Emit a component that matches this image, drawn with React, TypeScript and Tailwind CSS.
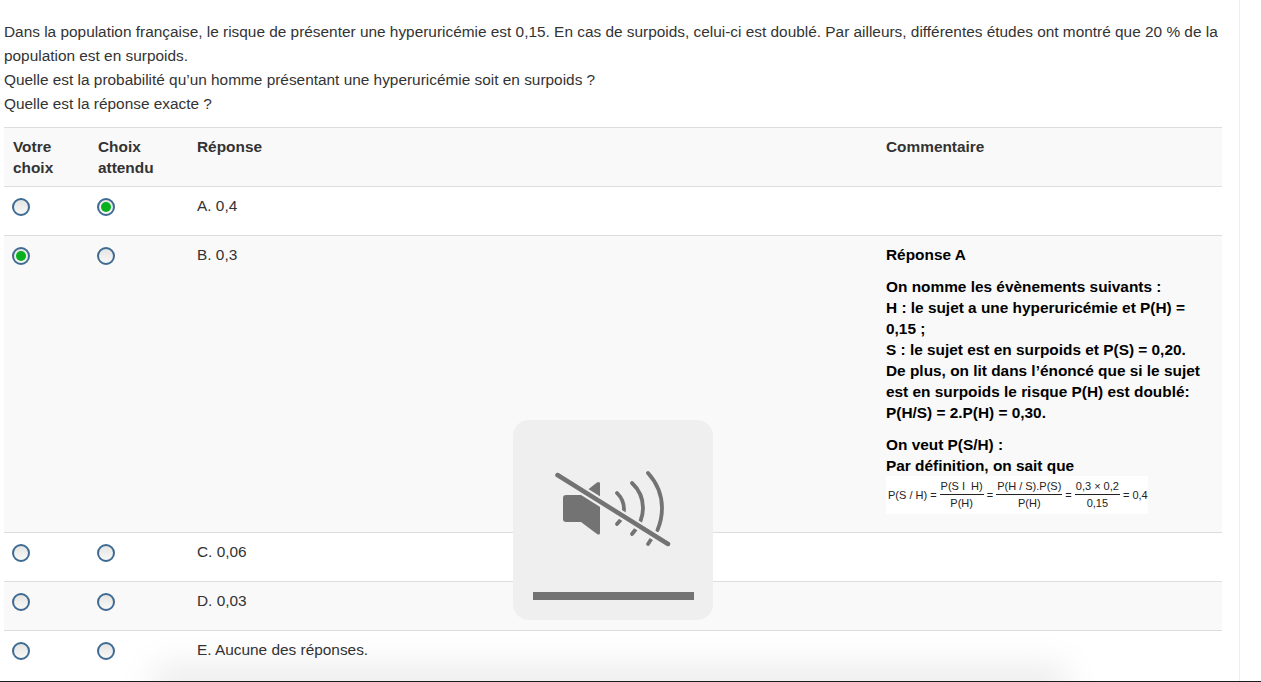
const ROWS = [
  { label: "A. 0,4", mine: false, expected: true },
  { label: "B. 0,3", mine: true, expected: false },
  { label: "C. 0,06", mine: false, expected: false },
  { label: "D. 0,03", mine: false, expected: false },
  { label: "E. Aucune des réponses.", mine: false, expected: false },
];

function Radio({ checked }: { checked: boolean }) {
  return (
    <span className="flex h-[18px] w-[18px] items-center justify-center rounded-full border-2 border-[#3f6b93] bg-gradient-to-b from-[#e4e4e2] to-[#f8f8f6]">
      {checked && <span className="h-[10px] w-[10px] rounded-full bg-[#08b01e]" />}
    </span>
  );
}

function Fraction({ top, bottom }: { top: string; bottom: string }) {
  return (
    <span className="inline-flex flex-col items-center">
      <span className="border-b border-[#222] px-px leading-[15px]">{top}</span>
      <span className="leading-[16px]">{bottom}</span>
    </span>
  );
}

function Formula() {
  return (
    <div className="flex h-[38px] w-[262px] items-center gap-[3px] whitespace-nowrap bg-white pl-[2px] text-[11px] font-normal text-[#222]">
      <span>P(S / H)</span>
      <span>=</span>
      <Fraction top={"P(S I\u00a0 H)"} bottom="P(H)" />
      <span>=</span>
      <Fraction top="P(H / S).P(S)" bottom="P(H)" />
      <span>=</span>
      <Fraction top="0,3 × 0,2" bottom="0,15" />
      <span>= 0,4</span>
    </div>
  );
}

function Comment() {
  return (
    <div className="font-bold text-black">
      <p className="mb-[11px]">Réponse A</p>
      <p className="mb-[11px]">
        On nomme les évènements suivants :<br />
        H : le sujet a une hyperuricémie et P(H) = 0,15 ;<br />
        S : le sujet est en surpoids et P(S) = 0,20.<br />
        De plus, on lit dans l’énoncé que si le sujet est en surpoids le risque P(H) est doublé:
        P(H/S) = 2.P(H) = 0,30.
      </p>
      <p>
        On veut P(S/H) :<br />
        Par définition, on sait que
      </p>
      <Formula />
    </div>
  );
}

function MutedIcon() {
  return (
    <svg width="125" height="85" viewBox="550 465 125 85" fill="none">
      <path
        d="M566 495H581L597 482.500q3-1.500 3 1V533q0 2.500-3 1L581 522H566q-3 0-3-3V498q0-3 3-3z"
        fill="#737373"
      />
      <g stroke="#737373" strokeWidth="3.800" strokeLinecap="round">
        <path d="M617 493c4.500 4.500 7 10 7 16 0 3-.5 6-1.500 9" />
        <path d="M617 524l4-4.500" />
        <path d="M632 483c7.500 7 11 16 11 25 0 5-1 9-2.500 13" />
        <path d="M632 534l4-5" />
        <path d="M648 473c9.500 10.500 14 23 14 35 0 8-1.500 15-4.500 22" />
        <path d="M648 544l4-6" />
      </g>
      <path d="M556 474L670 545.500" stroke="#efefef" strokeWidth="9" />
      <path d="M557.500 475L668 544" stroke="#737373" strokeWidth="4.500" strokeLinecap="round" />
    </svg>
  );
}

export default function App() {
  return (
    <div
      className="relative h-[682px] overflow-hidden bg-white text-[15.4px] leading-[24px] text-[#333]"
      style={{ fontFamily: '"Liberation Sans", Arial, sans-serif' }}
    >
      <div className="h-[681px] w-[1240px] border-r border-[#eeeeee] pl-[4px] pt-[20px]">
        <div className="w-[1218px]">
          <p>
            Dans la population française, le risque de présenter une hyperuricémie est 0,15. En cas de surpoids,
            celui-ci est doublé. Par ailleurs, différentes études ont montré que 20 % de la population est en surpoids.
          </p>
          <p>Quelle est la probabilité qu’un homme présentant une hyperuricémie soit en surpoids ?</p>
          <p>Quelle est la réponse exacte ?</p>

          <table className="mt-[11px] w-[1218px] table-fixed border-collapse">
            <colgroup>
              <col className="w-[85px]" />
              <col className="w-[99px]" />
              <col className="w-[689px]" />
              <col />
            </colgroup>
            <thead>
              <tr className="border-y border-[#dddddd] bg-[#f9f9f9] text-left align-top font-bold">
                <th className="h-[59px] pb-[6px] pl-[9px] pr-2 pt-[8px] leading-[21px]">Votre choix</th>
                <th className="pb-[6px] pl-[9px] pr-2 pt-[8px] leading-[21px]">Choix attendu</th>
                <th className="pb-[6px] pl-[9px] pr-2 pt-[8px] leading-[21px]">Réponse</th>
                <th className="pb-[6px] pl-[9px] pr-2 pt-[8px] leading-[21px]">Commentaire</th>
              </tr>
            </thead>
            <tbody>
              {ROWS.map((row, i) => (
                <tr
                  key={row.label}
                  className={`align-top ${i < ROWS.length - 1 ? "border-b border-[#dddddd]" : ""} ${i % 2 === 1 ? "bg-[#f9f9f9]" : "bg-white"}`}
                >
                  <td className="h-[49px] pl-[8px] pt-[11px]">
                    <Radio checked={row.mine} />
                  </td>
                  <td className="pl-[8px] pt-[11px]">
                    <Radio checked={row.expected} />
                  </td>
                  <td className="pl-[9px] pt-[7px] leading-[24px]">{row.label}</td>
                  <td className="pl-[9px] pr-[22px] pt-[8px] leading-[21px]">
                    {i === 1 && (
                      <div className="pb-[18px]">
                        <Comment />
                      </div>
                    )}
                  </td>
                </tr>
              ))}
            </tbody>
          </table>
        </div>
      </div>

      {/* volume overlay */}
      <div className="absolute left-[513px] top-[420px] flex h-[200px] w-[200px] flex-col rounded-[16px] bg-[#efefef]">
        <div className="ml-[37px] mt-[45px]">
          <MutedIcon />
        </div>
        <div className="ml-[20px] mt-[42px] h-[8px] w-[161px] bg-[#737373]" />
      </div>

      {/* dock shadow at the bottom edge */}
      <div className="absolute bottom-[-22px] left-[150px] h-[40px] w-[920px] rounded-[20px] bg-black/[0.07] blur-[16px]" />
      <div className="absolute bottom-0 left-0 h-px w-full bg-[#1c1c1c]" />
    </div>
  );
}
